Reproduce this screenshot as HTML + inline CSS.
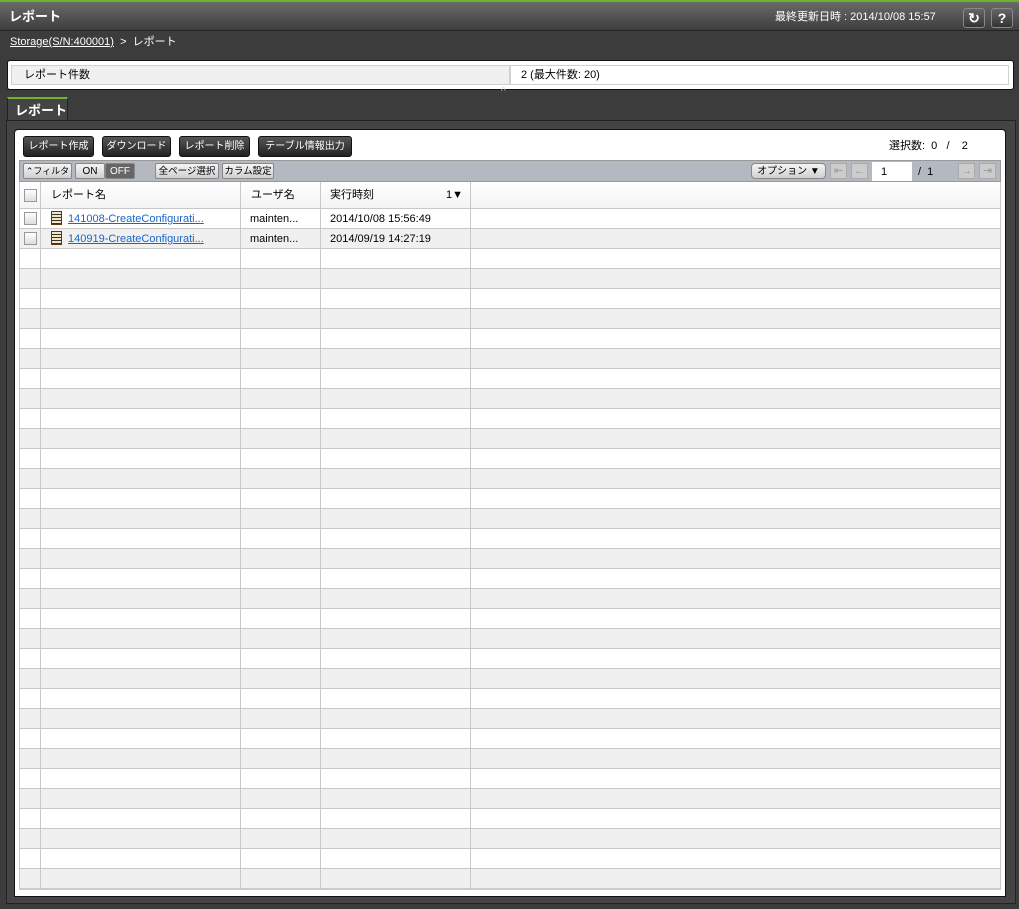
<!DOCTYPE html>
<html><head><meta charset="utf-8"><style>
*{box-sizing:border-box;margin:0;padding:0}
body{width:1019px;height:909px;background:#3c3c3c;font-family:"Liberation Sans","Noto Sans CJK JP",sans-serif;font-size:11px;line-height:13px;position:relative;overflow:hidden;color:#000;white-space:nowrap}
.a{position:absolute}
.hdr{left:0;top:0;width:1019px;height:31px;background:linear-gradient(#6a6a6a,#3e3e3e);border-top:2px solid #6fb52c;border-bottom:1px solid #222}
.btn{position:absolute;top:136px;height:21px;background:linear-gradient(#555,#222);color:#fff;border-radius:3px;border:1px solid #111;font-size:10px;line-height:20px;text-align:center}
.tb{position:absolute;height:16px;top:163px;border:1px solid #888;border-radius:2px;background:linear-gradient(#f4f4f4,#d0d0d0);font-size:10px;line-height:15px;text-align:center;overflow:hidden}
.vl{position:absolute;width:1px;background:#c8c8c8}
.ib{position:absolute;top:8px;width:22px;height:20px;border:1px solid #888;border-radius:3px;background:linear-gradient(#666,#333);color:#fff;font-weight:bold;text-align:center;line-height:18px;font-size:14px}
.cb{position:absolute;left:24px;width:13px;height:13px;border:1px solid #999;background:linear-gradient(#fff,#ddd)}
.lnk{color:#1a66cc;text-decoration:underline}
.pg{position:absolute;top:163px;width:17px;height:16px;border:1px solid #aaa;background:#ccc;color:#999;font-size:11px;text-align:center;line-height:14px}
</style></head><body>
<div class="a hdr"></div>
<div class="a" style="left:9px;top:9px;color:#fff;font-size:13px;line-height:15px;font-weight:bold">レポート</div>
<div class="a" style="left:775px;top:11px;color:#fff;font-size:11px">最終更新日時 : 2014/10/08 15:57</div>
<div class="ib" style="left:963px">↻</div>
<div class="ib" style="left:991px">?</div>
<div class="a" style="left:10px;top:36px;color:#fff;font-size:11px"><span style="text-decoration:underline">Storage(S/N:400001)</span> &nbsp;&gt; &nbsp;レポート</div>
<div class="a" style="left:7px;top:60px;width:1007px;height:30px;background:#fff;border:1px solid #111;border-radius:3px"></div>
<div class="a" style="left:11px;top:65px;width:499px;height:20px;background:#f0f0f0;border:1px solid #d0d0d0;padding-left:12px;line-height:18px">レポート件数</div>
<div class="a" style="left:510px;top:65px;width:499px;height:20px;background:#fff;border:1px solid #d0d0d0;padding-left:10px;line-height:18px">2 (最大件数: 20)</div>
<div class="a" style="left:501px;top:87px;color:#ddd;font-size:10px;line-height:10px">^</div>
<div class="a" style="left:7px;top:97px;width:61px;height:24px;background:#444;border-top:2px solid #6fb52c;border-left:1px solid #222;border-right:1px solid #222;color:#fff;font-weight:bold;font-size:13px;line-height:15px;padding:4px 0 0 7px">レポート</div>
<div class="a" style="left:6px;top:120px;width:1010px;height:784px;border:1px solid #222;background:#444"></div>
<div class="a" style="left:14px;top:129px;width:992px;height:768px;background:#fff;border:1px solid #111;border-radius:4px 4px 0 0"></div>
<div class="btn" style="left:23px;width:71px">レポート作成</div>
<div class="btn" style="left:102px;width:69px">ダウンロード</div>
<div class="btn" style="left:179px;width:71px">レポート削除</div>
<div class="btn" style="left:258px;width:94px">テーブル情報出力</div>
<div class="a" style="left:889px;top:140px">選択数: &nbsp;0 &nbsp;&nbsp;/ &nbsp;&nbsp;&nbsp;2</div>
<div class="a" style="left:19px;top:160px;width:982px;height:22px;background:#b4b8c0;border:1px solid #999"></div>
<div class="tb" style="left:23px;width:49px;font-size:9px">⌃フィルタ</div>
<div class="tb" style="left:75px;width:30px">ON</div>
<div class="tb" style="left:105px;width:30px;background:#666;color:#fff">OFF</div>
<div class="tb" style="left:155px;width:64px;font-size:9.5px">全ページ選択</div>
<div class="tb" style="left:222px;width:52px;font-size:9.5px">カラム設定</div>
<div class="tb" style="left:751px;width:75px;border-radius:4px">オプション ▼</div>
<div class="pg" style="left:830px">⇤</div>
<div class="pg" style="left:851px">←</div>
<div class="a" style="left:872px;top:162px;width:40px;height:19px;background:#fff;padding:4px 0 0 9px">1</div>
<div class="a" style="left:918px;top:166px">/ &nbsp;1</div>
<div class="pg" style="left:958px">→</div>
<div class="pg" style="left:979px">⇥</div>
<div class="a" style="left:19px;top:182px;width:982px;height:27px;background:linear-gradient(#fff,#f4f4f4);border-bottom:1px solid #c8c8c8;border-left:1px solid #c8c8c8;border-right:1px solid #c8c8c8"></div>
<div class="a" style="left:19px;top:209px;width:982px;height:681px;background:repeating-linear-gradient(#fff 0 19px,#c8c8c8 19px 20px,#f0f0f0 20px 39px,#c8c8c8 39px 40px);border-left:1px solid #c8c8c8;border-right:1px solid #c8c8c8;border-bottom:2px solid #ccc"></div>
<div class="vl" style="left:40px;top:182px;height:708px"></div>
<div class="vl" style="left:240px;top:182px;height:708px"></div>
<div class="vl" style="left:320px;top:182px;height:708px"></div>
<div class="vl" style="left:470px;top:182px;height:708px"></div>
<div class="cb" style="top:189px"></div>
<div class="a" style="left:51px;top:189px">レポート名</div>
<div class="a" style="left:251px;top:189px">ユーザ名</div>
<div class="a" style="left:330px;top:189px">実行時刻</div>
<div class="a" style="left:446px;top:189px">1▼</div>
<div class="cb" style="top:212px"></div>
<div class="cb" style="top:232px"></div>
<div class="a" style="left:51px;top:211px;width:11px;height:14px;border:1px solid #5a3a10;background:repeating-linear-gradient(#f4e4c0 0 2px,#333 2px 3px)"></div>
<div class="a" style="left:51px;top:231px;width:11px;height:14px;border:1px solid #5a3a10;background:repeating-linear-gradient(#f4e4c0 0 2px,#333 2px 3px)"></div>
<div class="a lnk" style="left:68px;top:213px">141008-CreateConfigurati...</div>
<div class="a lnk" style="left:68px;top:233px">140919-CreateConfigurati...</div>
<div class="a" style="left:250px;top:213px">mainten...</div>
<div class="a" style="left:250px;top:233px">mainten...</div>
<div class="a" style="left:330px;top:213px">2014/10/08 15:56:49</div>
<div class="a" style="left:330px;top:233px">2014/09/19 14:27:19</div>
</body></html>
